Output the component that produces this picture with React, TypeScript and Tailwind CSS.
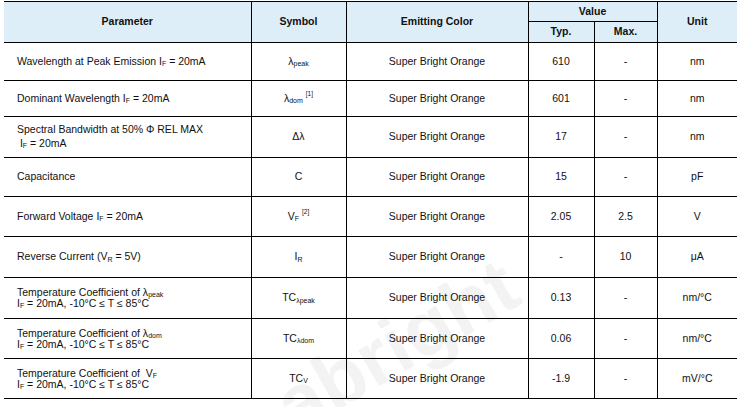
import React from 'react';

type Row = {
  param: React.ReactNode;
  symbol: React.ReactNode;
  typ: string;
  max: string;
  unit: string;
  h: string;
};

const Sub = ({ children }: { children: React.ReactNode }) => (
  <sub className="text-[7px] leading-none bottom-[-0.2em]">{children}</sub>
);

const Sup = ({ children }: { children: React.ReactNode }) => (
  <sup className="text-[6.5px] leading-none top-[-0.9em] ml-[3px]">{children}</sup>
);

const IF = () => (
  <>
    I<Sub>F</Sub>
  </>
);

const tempLine = (
  <>
    <IF /> = 20mA, -10°C ≤ T ≤ 85°C
  </>
);

const rows: Row[] = [
  {
    param: (
      <>
        Wavelength at Peak Emission <IF /> = 20mA
      </>
    ),
    symbol: (
      <>
        λ<Sub>peak</Sub>
      </>
    ),
    typ: '610',
    max: '-',
    unit: 'nm',
    h: 'h-[38px]',
  },
  {
    param: (
      <>
        Dominant Wavelength <IF /> = 20mA
      </>
    ),
    symbol: (
      <>
        λ<Sub>dom</Sub>
        <Sup>[1]</Sup>
      </>
    ),
    typ: '601',
    max: '-',
    unit: 'nm',
    h: 'h-[36px]',
  },
  {
    param: (
      <div className="leading-[14px] -mt-[3px]">
        Spectral Bandwidth at 50% Φ REL MAX
        <br />
        &nbsp;<IF /> = 20mA
      </div>
    ),
    symbol: 'Δλ',
    typ: '17',
    max: '-',
    unit: 'nm',
    h: 'h-[41px]',
  },
  { param: 'Capacitance', symbol: 'C', typ: '15', max: '-', unit: 'pF', h: 'h-[39px]' },
  {
    param: (
      <>
        Forward Voltage <IF /> = 20mA
      </>
    ),
    symbol: (
      <>
        V<Sub>F</Sub>
        <Sup>[2]</Sup>
      </>
    ),
    typ: '2.05',
    max: '2.5',
    unit: 'V',
    h: 'h-[40px]',
  },
  {
    param: (
      <>
        Reverse Current (V<Sub>R</Sub> = 5V)
      </>
    ),
    symbol: (
      <>
        I<Sub>R</Sub>
      </>
    ),
    typ: '-',
    max: '10',
    unit: 'μA',
    h: 'h-[41px]',
  },
  {
    param: (
      <div className="leading-[11px]">
        Temperature Coefficient of λ<Sub>peak</Sub>
        <br />
        {tempLine}
      </div>
    ),
    symbol: (
      <>
        TC<Sub>λpeak</Sub>
      </>
    ),
    typ: '0.13',
    max: '-',
    unit: 'nm/°C',
    h: 'h-[41px]',
  },
  {
    param: (
      <div className="leading-[11px]">
        Temperature Coefficient of λ<Sub>dom</Sub>
        <br />
        {tempLine}
      </div>
    ),
    symbol: (
      <>
        TC<Sub>λdom</Sub>
      </>
    ),
    typ: '0.06',
    max: '-',
    unit: 'nm/°C',
    h: 'h-[40px]',
  },
  {
    param: (
      <div className="leading-[11px]">
        Temperature Coefficient of&nbsp; V<Sub>F</Sub>
        <br />
        {tempLine}
      </div>
    ),
    symbol: (
      <>
        TC<Sub>V</Sub>
      </>
    ),
    typ: '-1.9',
    max: '-',
    unit: 'mV/°C',
    h: 'h-[40px]',
  },
];

const cell = 'border border-black p-0 align-middle';

export default function App() {
  return (
    <div
      className="relative w-[755px] h-[407px] overflow-hidden bg-white text-[#111] text-[10.5px]"
      style={{ fontFamily: '"Liberation Sans", Arial, sans-serif' }}
    >
      {/* faint watermark */}
      <div className="absolute left-[282px] top-[372px] origin-left -rotate-[30deg] text-[78px] font-bold leading-none text-[#f3f3f3] whitespace-nowrap select-none pointer-events-none">
        abright
      </div>

      <table className="relative ml-[4px] mt-[1px] w-[733px] table-fixed border-collapse">
        <colgroup>
          <col className="w-[247px]" />
          <col className="w-[95px]" />
          <col className="w-[182px]" />
          <col className="w-[66px]" />
          <col className="w-[63px]" />
          <col className="w-[80px]" />
        </colgroup>
        <thead className="bg-[#ddeef8] font-bold">
          <tr className="h-[20px]">
            <th rowSpan={2} className={`${cell} border-l-0`}>Parameter</th>
            <th rowSpan={2} className={cell}>Symbol</th>
            <th rowSpan={2} className={cell}>Emitting Color</th>
            <th colSpan={2} className={cell}>Value</th>
            <th rowSpan={2} className={`${cell} border-r-0`}>Unit</th>
          </tr>
          <tr className="h-[21px]">
            <th className={cell}>Typ.</th>
            <th className={cell}>Max.</th>
          </tr>
        </thead>
        <tbody>
          {rows.map((r, i) => (
            <tr key={i} className={r.h}>
              <td className={`${cell} border-l-0 pl-[13px] text-left`}>{r.param}</td>
              <td className={`${cell} text-center`}>{r.symbol}</td>
              <td className={`${cell} text-center`}>Super Bright Orange</td>
              <td className={`${cell} text-center`}>{r.typ}</td>
              <td className={`${cell} text-center`}>{r.max}</td>
              <td className={`${cell} border-r-0 text-center`}>{r.unit}</td>
            </tr>
          ))}
        </tbody>
      </table>
    </div>
  );
}
